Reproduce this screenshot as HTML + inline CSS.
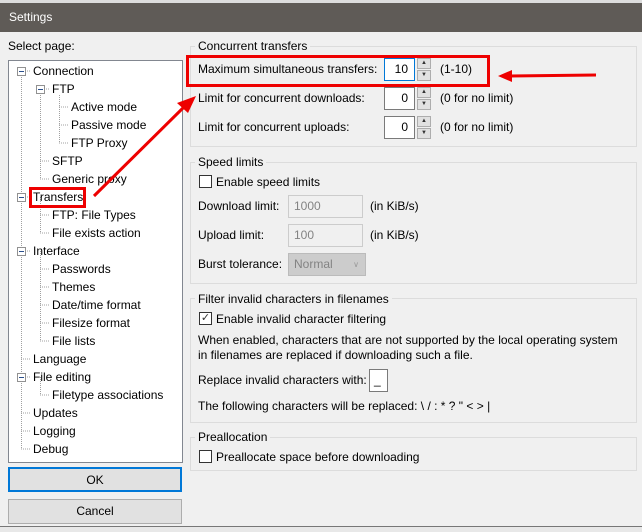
<!DOCTYPE html>
<html><head><style>
*{margin:0;padding:0;box-sizing:border-box}
body{width:642px;height:532px;position:relative;overflow:hidden;background:#f0f0f0;font-family:"Liberation Sans",sans-serif;font-size:12px;color:#000}
.a{position:absolute;white-space:nowrap}
.t{position:absolute;white-space:nowrap;line-height:16px}
.grp{position:absolute;border:1px solid #dcdcdc}
.lg{position:absolute;background:#f0f0f0;padding:0 3px;line-height:14px}
.inp{position:absolute;background:#fff;border:1px solid #7a7a7a;height:23px;text-align:right;padding-right:6px;line-height:21px}
.spin{position:absolute;width:14px;height:23px}
.spin div{height:11px;border:1px solid #adadad;background:#e1e1e1;margin-bottom:1px;font-size:6px;text-align:center;line-height:9px;color:#333}
.dis{position:absolute;background:#f0f0f0;border:1px solid #ccc;color:#838383;height:23px;line-height:21px;padding-left:5px}
.cb{position:absolute;width:13px;height:13px;border:1px solid #333;background:#fff}
.btn{position:absolute;left:8px;width:174px;height:25px;background:#e1e1e1;border:1px solid #adadad;text-align:center;line-height:23px}
</style></head><body>
<div class="a" style="left:0;top:0;width:642px;height:3px;background:#ddd"></div>
<div class="a" style="left:0;top:3px;width:642px;height:29px;background:#5f5b57;color:#fff;font-size:12px;line-height:29px;padding-left:9px">Settings</div>
<div class="a" style="left:0;top:526px;width:642px;height:6px;background:#e8e8e8;border-top:1px solid #777"></div>
<div class="t" style="left:8px;top:38px">Select page:</div>
<div class="a" style="left:8px;top:60px;width:175px;height:403px;background:#fff;border:1px solid #828790"></div>
<svg class="a" style="left:0;top:0" width="190" height="470">
<g stroke="#a0a0a0" stroke-dasharray="1,1" fill="none">
<line x1="21.5" y1="71" x2="21.5" y2="449"/>
<line x1="40.5" y1="89" x2="40.5" y2="179"/>
<line x1="59.5" y1="95" x2="59.5" y2="143"/>
<line x1="40.5" y1="197" x2="40.5" y2="233"/>
<line x1="40.5" y1="251" x2="40.5" y2="341"/>
<line x1="40.5" y1="377" x2="40.5" y2="395"/>
<path d="M21 71h10M40 89h10M59 107h10M59 125h10M59 143h10M40 161h10M40 179h10M21 197h10M40 215h10M40 233h10M21 251h10M40 269h10M40 287h10M40 305h10M40 323h10M40 341h10M21 359h10M21 377h10M40 395h10M21 413h10M21 431h10M21 449h10"/>
</g>
<g fill="#fff" stroke="#919191">
<rect x="17.5" y="67.5" width="8" height="8"/><rect x="36.5" y="85.5" width="8" height="8"/><rect x="17.5" y="193.5" width="8" height="8"/><rect x="17.5" y="247.5" width="8" height="8"/><rect x="17.5" y="373.5" width="8" height="8"/>
</g>
<g stroke="#2a4f8c"><path d="M19 71.5h5M38 89.5h5M19 197.5h5M19 251.5h5M19 377.5h5"/></g>
</svg>
<div class="t" style="left:33px;top:63px">Connection</div>
<div class="t" style="left:52px;top:81px">FTP</div>
<div class="t" style="left:71px;top:99px">Active mode</div>
<div class="t" style="left:71px;top:117px">Passive mode</div>
<div class="t" style="left:71px;top:135px">FTP Proxy</div>
<div class="t" style="left:52px;top:153px">SFTP</div>
<div class="t" style="left:52px;top:171px">Generic proxy</div>
<div class="t" style="left:33px;top:189px">Transfers</div>
<div class="t" style="left:52px;top:207px">FTP: File Types</div>
<div class="t" style="left:52px;top:225px">File exists action</div>
<div class="t" style="left:33px;top:243px">Interface</div>
<div class="t" style="left:52px;top:261px">Passwords</div>
<div class="t" style="left:52px;top:279px">Themes</div>
<div class="t" style="left:52px;top:297px">Date/time format</div>
<div class="t" style="left:52px;top:315px">Filesize format</div>
<div class="t" style="left:52px;top:333px">File lists</div>
<div class="t" style="left:33px;top:351px">Language</div>
<div class="t" style="left:33px;top:369px">File editing</div>
<div class="t" style="left:52px;top:387px">Filetype associations</div>
<div class="t" style="left:33px;top:405px">Updates</div>
<div class="t" style="left:33px;top:423px">Logging</div>
<div class="t" style="left:33px;top:441px">Debug</div>
<div class="a" style="left:29px;top:187px;width:57px;height:21px;border:3px solid #e00"></div>
<div class="btn" style="top:467px;border:2px solid #0078d7">OK</div>
<div class="btn" style="top:499px">Cancel</div>

<div class="grp" style="left:190px;top:46px;width:447px;height:101px"></div>
<div class="lg" style="left:195px;top:39px">Concurrent transfers</div>
<div class="t" style="left:198px;top:61px">Maximum simultaneous transfers:</div>
<div class="inp" style="left:384px;top:58px;width:31px;border-color:#0078d7">10</div>
<div class="spin" style="left:417px;top:58px"><div>▲</div><div>▼</div></div>
<div class="t" style="left:440px;top:61px">(1-10)</div>
<div class="t" style="left:198px;top:90px">Limit for concurrent downloads:</div>
<div class="inp" style="left:384px;top:87px;width:31px">0</div>
<div class="spin" style="left:417px;top:87px"><div>▲</div><div>▼</div></div>
<div class="t" style="left:440px;top:90px">(0 for no limit)</div>
<div class="t" style="left:198px;top:119px">Limit for concurrent uploads:</div>
<div class="inp" style="left:384px;top:116px;width:31px">0</div>
<div class="spin" style="left:417px;top:116px"><div>▲</div><div>▼</div></div>
<div class="t" style="left:440px;top:119px">(0 for no limit)</div>
<div class="a" style="left:186px;top:55px;width:304px;height:32px;border:3px solid #e00"></div>

<div class="grp" style="left:190px;top:162px;width:447px;height:122px"></div>
<div class="lg" style="left:195px;top:155px">Speed limits</div>
<div class="cb" style="left:199px;top:175px"></div>
<div class="t" style="left:216px;top:174px">Enable speed limits</div>
<div class="t" style="left:198px;top:198px">Download limit:</div>
<div class="dis" style="left:288px;top:195px;width:75px">1000</div>
<div class="t" style="left:370px;top:198px">(in KiB/s)</div>
<div class="t" style="left:198px;top:227px">Upload limit:</div>
<div class="dis" style="left:288px;top:224px;width:75px">100</div>
<div class="t" style="left:370px;top:227px">(in KiB/s)</div>
<div class="t" style="left:198px;top:256px">Burst tolerance:</div>
<div class="dis" style="left:288px;top:253px;width:78px;background:#ccc;border-color:#bbb">Normal<span style="position:absolute;right:6px;font-size:8px;color:#999">∨</span></div>

<div class="grp" style="left:190px;top:298px;width:447px;height:125px"></div>
<div class="lg" style="left:195px;top:292px">Filter invalid characters in filenames</div>
<div class="cb" style="left:199px;top:312px;font-size:11px;line-height:11px;text-align:center;color:#333">✓</div>
<div class="t" style="left:216px;top:311px">Enable invalid character filtering</div>
<div class="t" style="left:198px;top:332px">When enabled, characters that are not supported by the local operating system</div>
<div class="t" style="left:198px;top:347px">in filenames are replaced if downloading such a file.</div>
<div class="t" style="left:198px;top:372px">Replace invalid characters with:</div>
<div class="inp" style="left:369px;top:369px;width:19px;text-align:left;padding-left:4px">_</div>
<div class="t" style="left:198px;top:398px">The following characters will be replaced: \ / : * ? " &lt; &gt; |</div>

<div class="grp" style="left:190px;top:437px;width:447px;height:34px"></div>
<div class="lg" style="left:195px;top:430px">Preallocation</div>
<div class="cb" style="left:199px;top:450px"></div>
<div class="t" style="left:216px;top:449px">Preallocate space before downloading</div>

<svg class="a" style="left:0;top:0" width="642" height="300">
<g stroke="#e00" stroke-width="3" fill="#e00">
<line x1="94" y1="196" x2="184" y2="107"/>
<line x1="596" y1="75" x2="510" y2="76"/>
</g>
<polygon fill="#e00" points="196,96 177,103 188,113"/>
<polygon fill="#e00" points="498,76 512,70 512,82"/>
</svg>
</body></html>
